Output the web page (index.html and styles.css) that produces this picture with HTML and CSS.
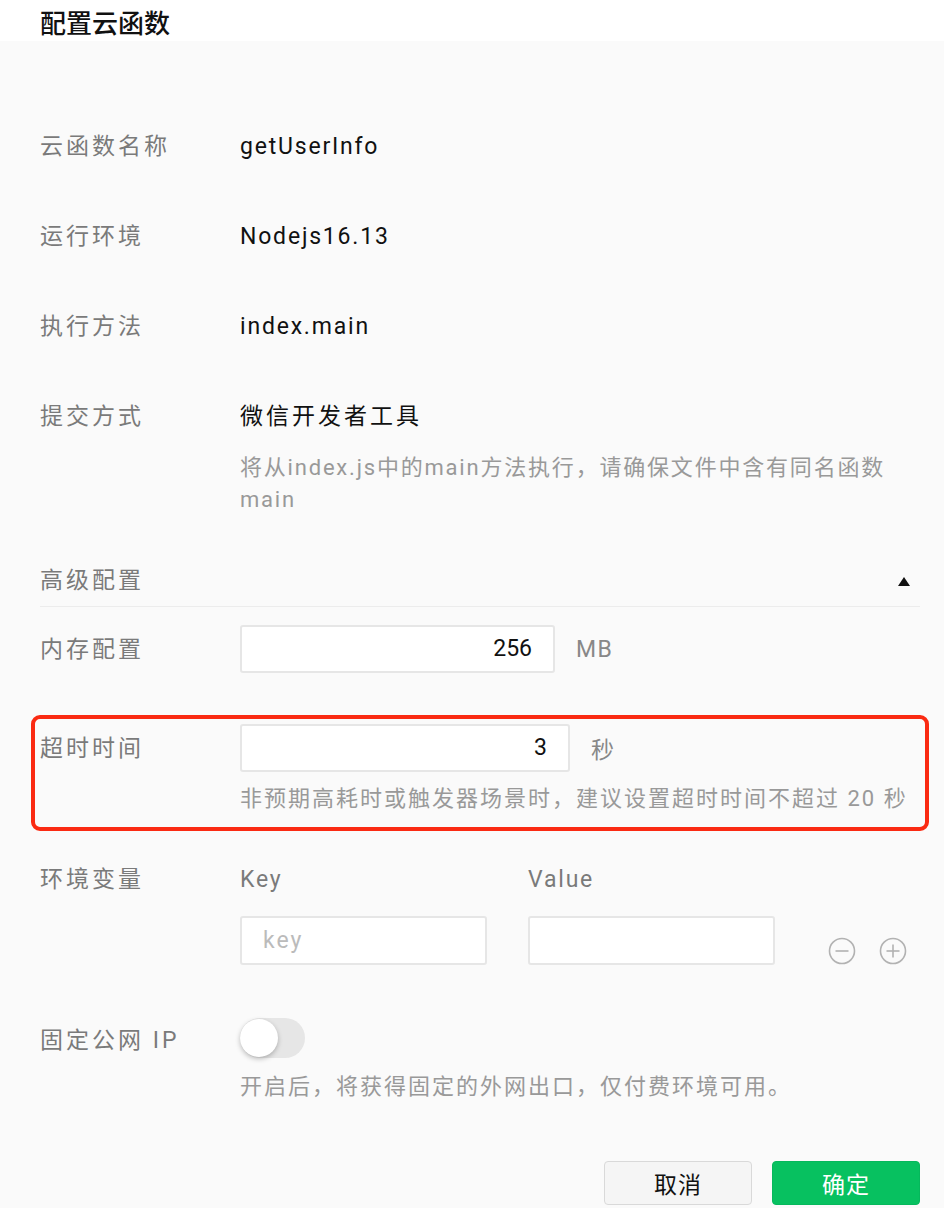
FILE: index.html
```html
<!DOCTYPE html>
<html lang="zh-CN">
<head>
    <meta charset="UTF-8">
    <meta name="viewport" content="width=device-width, initial-scale=1.0">
    <title>配置云函数</title>
    <link rel="stylesheet" href="styles.css">
</head>
<body>

    <header class="title-bar">
        <h1>配置云函数</h1>
    </header>

    <main class="form">
        <div class="row">
            <div class="label">云函数名称</div>
            <div class="field"><div class="value">getUserInfo</div></div>
        </div>
        <div class="row">
            <div class="label">运行环境</div>
            <div class="field"><div class="value">Nodejs16.13</div></div>
        </div>
        <div class="row">
            <div class="label">执行方法</div>
            <div class="field"><div class="value">index.main</div></div>
        </div>
        <div class="row row-submit">
            <div class="label">提交方式</div>
            <div class="field">
                <div class="value value-cjk">微信开发者工具</div>
                <div class="hint hint-submit">将从index.js中的main方法执行，请确保文件中含有同名函数main</div>
            </div>
        </div>

        <div class="section-head">
            <span class="section-title">高级配置</span>
            <span class="caret"></span>
        </div>

        <div class="row row-input row-memory">
            <div class="label">内存配置</div>
            <div class="field">
                <div class="inline">
                    <div class="num-input memory">256</div>
                    <span class="unit">MB</span>
                </div>
            </div>
        </div>

        <div class="highlight">
            <div class="row row-input">
                <div class="label">超时时间</div>
                <div class="field">
                    <div class="inline">
                        <div class="num-input timeout">3</div>
                        <span class="unit">秒</span>
                    </div>
                    <div class="hint">非预期高耗时或触发器场景时，建议设置超时时间不超过 20 秒</div>
                </div>
            </div>
        </div>

        <div class="row row-env">
            <div class="label">环境变量</div>
            <div class="field">
                <div class="env-grid">
                    <div class="col-head">Key</div>
                    <div class="col-head">Value</div>
                    <div></div>
                    <div class="text-input placeholder">key</div>
                    <div class="text-input"></div>
                    <div class="env-actions">
                        <svg class="circle-btn" viewBox="0 0 28 28" width="28" height="28">
                            <circle cx="14" cy="14" r="12.5" fill="none" stroke="#b2b2b2" stroke-width="1.6"/>
                            <line x1="7.5" y1="14" x2="20.5" y2="14" stroke="#b2b2b2" stroke-width="1.6"/>
                        </svg>
                        <svg class="circle-btn" viewBox="0 0 28 28" width="28" height="28">
                            <circle cx="14" cy="14" r="12.5" fill="none" stroke="#b2b2b2" stroke-width="1.6"/>
                            <line x1="7.5" y1="14" x2="20.5" y2="14" stroke="#b2b2b2" stroke-width="1.6"/>
                            <line x1="14" y1="7.5" x2="14" y2="20.5" stroke="#b2b2b2" stroke-width="1.6"/>
                        </svg>
                    </div>
                </div>
            </div>
        </div>

        <div class="row row-ip">
            <div class="label">固定公网 IP</div>
            <div class="field">
                <div class="switch"><span class="knob"></span></div>
                <div class="hint">开启后，将获得固定的外网出口，仅付费环境可用。</div>
            </div>
        </div>

        <div class="actions">
            <button class="btn btn-cancel">取消</button>
            <button class="btn btn-ok">确定</button>
        </div>
    </main>

</body>
</html>
```

FILE: styles.css
```css
body {
    margin: 0;
    padding: 0;
    background: #fafafa;
    font-family: Roboto, "Noto Sans CJK SC", sans-serif;
    color: #1a1a1a;
}

.title-bar {
    height: 41px;
    box-sizing: border-box;
    padding: 7px 40px 0;
    background: #fff;
}

.title-bar h1 {
    margin: 0;
    font-size: 26px;
    font-weight: 500;
    line-height: 34px;
    color: #111;
}

.form {
    padding: 90px 24px 0 40px;
}

.row {
    display: grid;
    grid-template-columns: 200px 1fr;
    align-items: start;
    margin-bottom: 58px;
}

.label {
    font-size: 23px;
    line-height: 32px;
    letter-spacing: 3px;
    color: #7a7a7a;
}

.value {
    font-size: 23px;
    line-height: 32px;
    letter-spacing: 1.8px;
    color: #111;
}

.value-cjk {
    letter-spacing: 3px;
}

.hint {
    font-size: 22px;
    line-height: 32px;
    letter-spacing: 2px;
    color: #999;
}

.hint-submit {
    margin-top: 19px;
    max-width: 660px;
    letter-spacing: 1.8px;
}

.row-submit {
    margin-bottom: 49px;
}

/* advanced section */
.section-head {
    display: flex;
    justify-content: space-between;
    align-items: center;
    padding-bottom: 9px;
    border-bottom: 1px solid #ececec;
    margin-bottom: 18px;
}

.section-title {
    font-size: 23px;
    line-height: 32px;
    letter-spacing: 3px;
    color: #7a7a7a;
}

.caret {
    width: 0;
    height: 0;
    margin-right: 10px;
    border-left: 6px solid transparent;
    border-right: 6px solid transparent;
    border-bottom: 9px solid #111;
}

.row-input .label {
    padding-top: 9px;
}

.row-memory {
    margin-bottom: 42px;
}

.inline {
    display: flex;
    align-items: center;
}

.num-input {
    height: 48px;
    box-sizing: border-box;
    padding: 0 21px;
    border: 2px solid #e6e6e6;
    border-radius: 3px;
    background: #fff;
    font-size: 23px;
    line-height: 44px;
    text-align: right;
    color: #111;
}

.memory {
    width: 315px;
}

.timeout {
    width: 330px;
}

.unit {
    margin-left: 21px;
    font-size: 23px;
    letter-spacing: 1.5px;
    color: #888;
}

.highlight {
    margin: 0 -9px 33px -9px;
    padding: 5px 5px 12px 5px;
    border: 4px solid #fa2a12;
    border-radius: 9px;
}

.highlight .row {
    margin-bottom: 0;
}

.highlight .hint {
    margin-top: 11px;
}

/* env vars */
.env-grid {
    display: grid;
    grid-template-columns: 247px 247px auto;
    column-gap: 41px;
    row-gap: 20px;
    align-items: end;
}

.col-head {
    font-size: 23px;
    line-height: 32px;
    letter-spacing: 1.8px;
    color: #7a7a7a;
}

.text-input {
    height: 49px;
    box-sizing: border-box;
    padding: 0 21px;
    border: 2px solid #e6e6e6;
    border-radius: 3px;
    background: #fff;
    font-size: 23px;
    line-height: 45px;
}

.placeholder {
    color: #bbb;
    letter-spacing: 2px;
}

.env-actions {
    display: flex;
    gap: 23px;
    margin-left: 12px;
}

.circle-btn {
    display: block;
}

.row-env {
    margin-bottom: 53px;
}

/* switch */
.row-ip .label {
    padding-top: 7px;
}

.switch {
    position: relative;
    width: 65px;
    height: 40px;
    border-radius: 20px;
    background: #e6e6e6;
}

.knob {
    position: absolute;
    top: 1px;
    left: 0;
    width: 38px;
    height: 38px;
    border-radius: 50%;
    background: #fff;
    box-shadow: 0 2px 5px rgba(0, 0, 0, 0.25);
}

.row-ip .hint {
    margin-top: 13px;
}

/* footer buttons */
.actions {
    display: flex;
    justify-content: flex-end;
    gap: 20px;
}

.btn {
    width: 148px;
    height: 44px;
    border-radius: 4px;
    font-family: inherit;
    font-size: 23px;
    letter-spacing: 1px;
    cursor: pointer;
}

.btn-cancel {
    border: 1px solid #d9d9d9;
    background: #f5f5f5;
    color: #111;
}

.btn-ok {
    border: 1px solid #06b85c;
    background: #07c160;
    color: #fff;
}
```
